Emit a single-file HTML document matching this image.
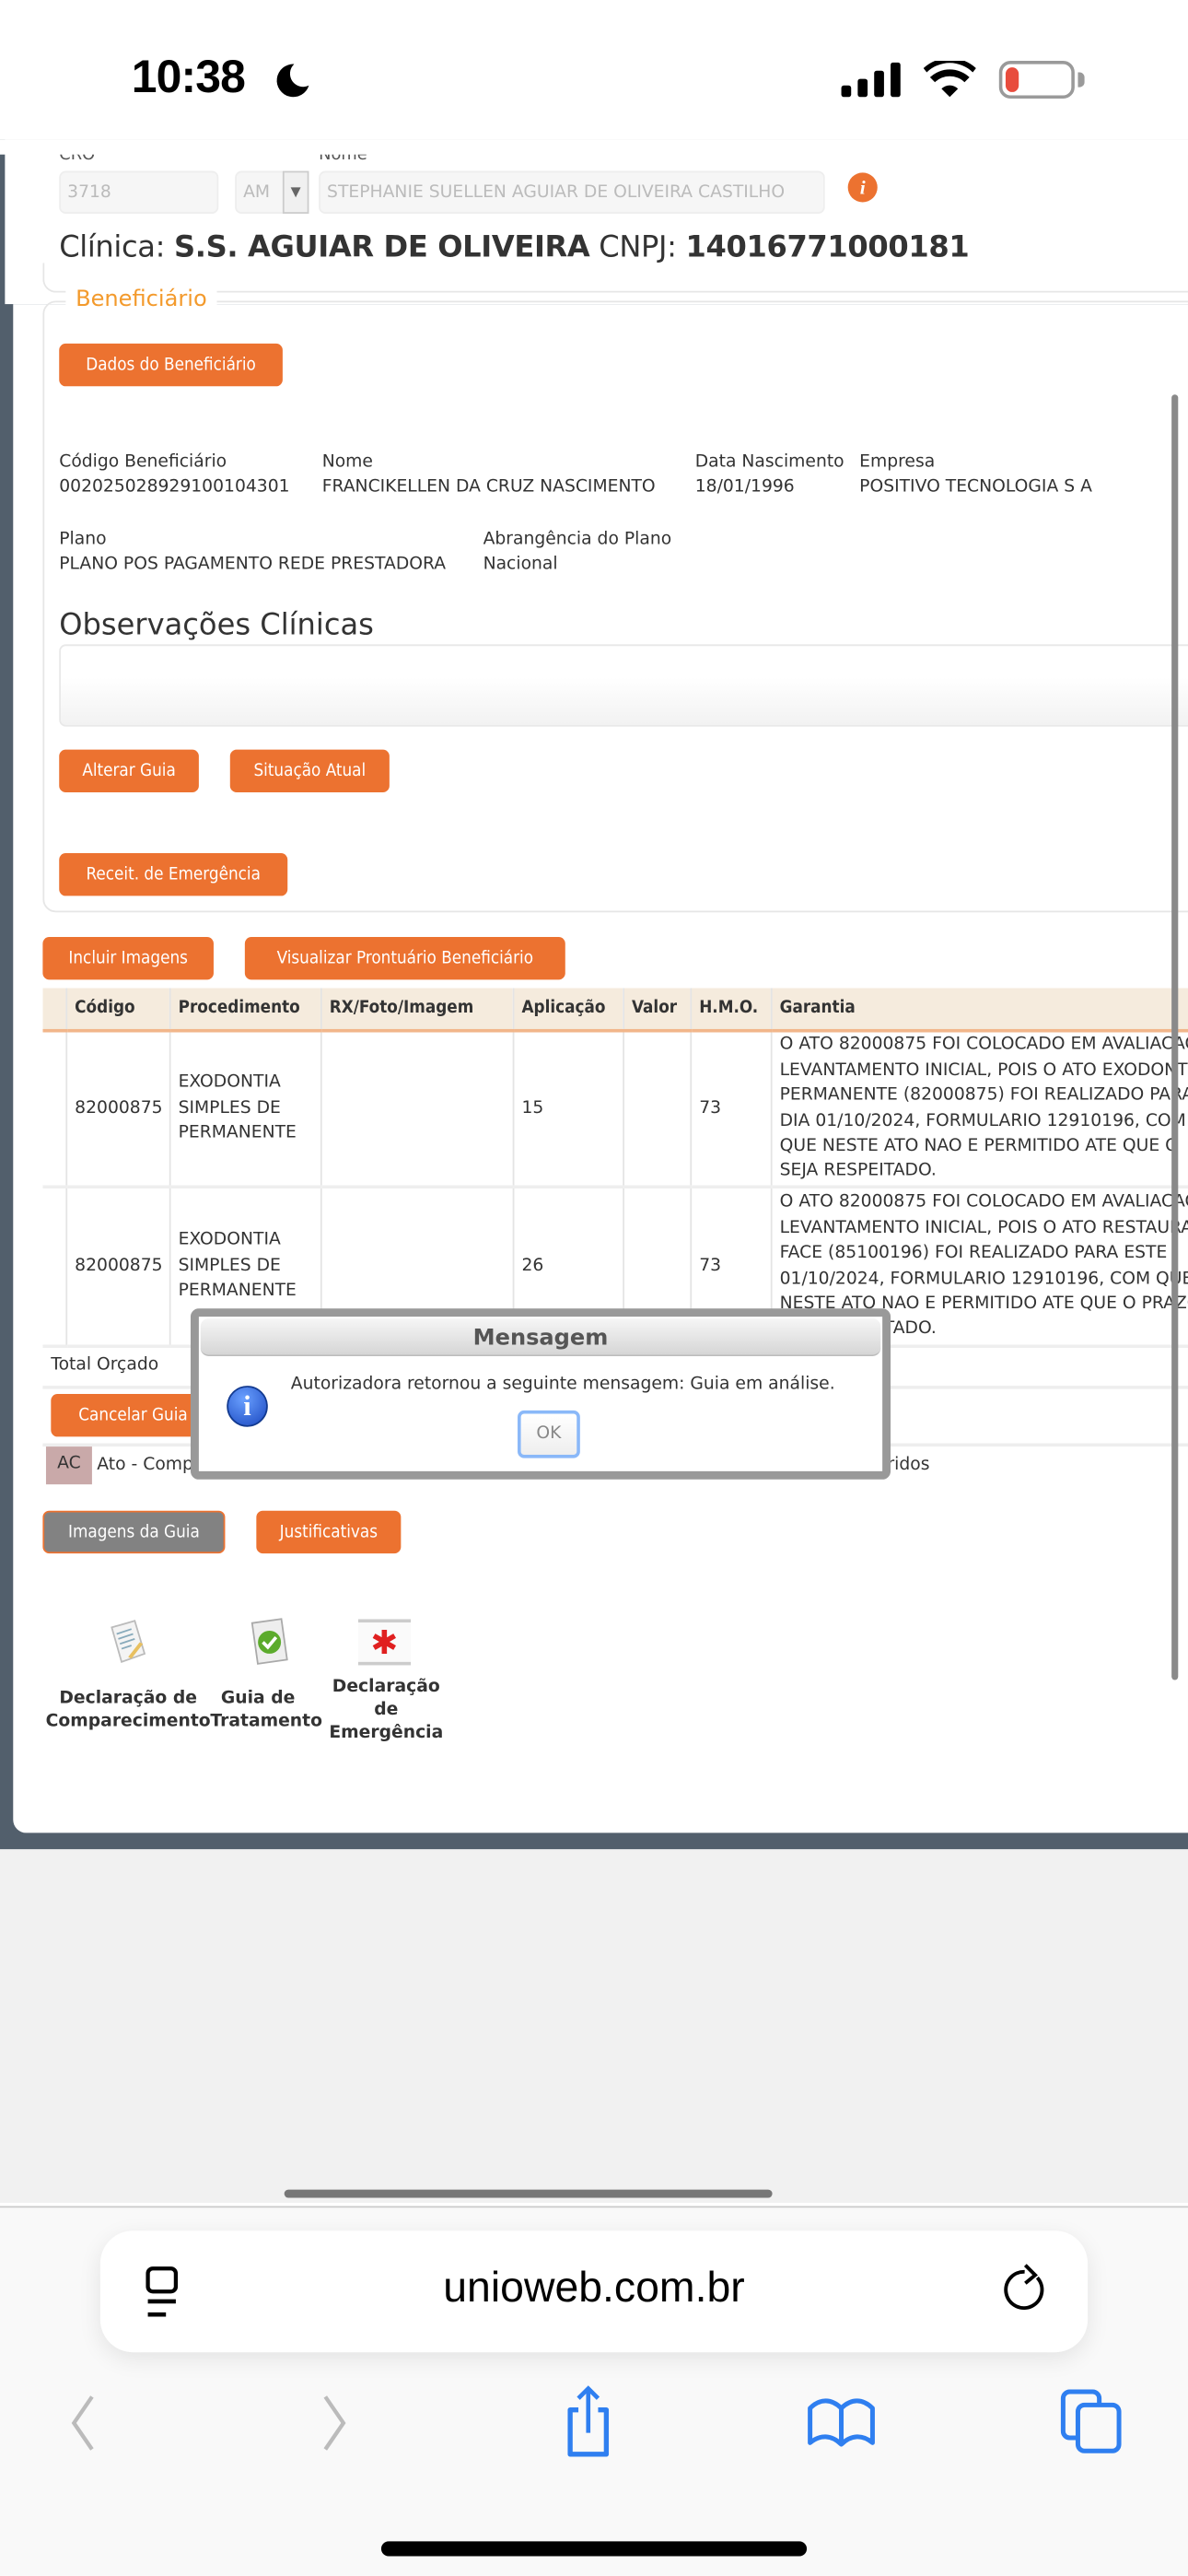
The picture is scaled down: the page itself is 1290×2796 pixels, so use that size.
<!DOCTYPE html>
<html><head><meta charset="utf-8"><style>
*{margin:0;padding:0;box-sizing:border-box}
html,body{width:1290px;height:2796px;overflow:hidden;background:#fff}
#s{position:absolute;left:0;top:0;width:723px;height:1567px;transform:scale(1.78423);transform-origin:0 0;font-family:"DejaVu Sans","Liberation Sans",sans-serif;font-size:10.5px;color:#333;overflow:hidden}
.a{position:absolute;white-space:nowrap}
.btn{position:absolute;background:#ec7230;color:#fff;border-radius:4px;font-size:10.5px;height:26px;line-height:26px;text-align:center;font-family:"DejaVu Sans Condensed","DejaVu Sans",sans-serif}
.inp{position:absolute;background:#f6f6f6;border:1px solid #eee;border-radius:4px;color:#bbb;font-size:10.5px;padding-left:4px;line-height:24px;height:26px}
td,th{border-right:1px solid #e4e4e4;vertical-align:middle;padding:0 5px;font-size:10.5px;line-height:15.4px;text-align:left;overflow:hidden}
th{font-weight:bold;background:#f5ebdd;height:26px;border-bottom:2px solid #f2b68a;font-family:"DejaVu Sans Condensed","DejaVu Sans",sans-serif}
#tw{position:absolute;left:26px;top:601px;width:720px;overflow:hidden}
table{border-collapse:collapse;table-layout:fixed;width:703px}
tr.r td{border-bottom:2px solid #eee}
.lab{position:absolute;font-weight:bold;font-size:10.5px;text-align:center;line-height:14px;color:#333}
</style></head><body><div id="s">
<div class="a" style="left:80px;top:31px;font-family:'Liberation Sans',sans-serif;font-size:28px;font-weight:bold;color:#000;letter-spacing:-0.5px">10:38</div>
<svg class="a" style="left:166px;top:37px" width="24" height="24" viewBox="0 0 24 24"><path d="M13 2a10 10 0 1 0 9 13A8 8 0 0 1 13 2z" fill="#000"/></svg>
<svg class="a" style="left:512px;top:38px" width="40" height="22"><rect x="0" y="14" width="6" height="7" rx="1.5"/><rect x="10" y="10" width="6" height="11" rx="1.5"/><rect x="20" y="5" width="6" height="16" rx="1.5"/><rect x="30" y="0" width="6" height="21" rx="1.5"/></svg>
<svg class="a" style="left:562px;top:37px" width="32" height="23" viewBox="0 0 32 23"><path d="M16 22l-5-5a7 7 0 0 1 10 0z"/><path d="M7 13a13 13 0 0 1 18 0l3-3a17.5 17.5 0 0 0-24 0z"/><path d="M2 8a20 20 0 0 1 28 0l2-2.5a23.5 23.5 0 0 0-32 0z" transform="translate(0,-1)"/></svg>
<div class="a" style="left:608px;top:37px;width:46px;height:23px;border:2.5px solid #9a9a9a;border-radius:7px"></div>
<div class="a" style="left:612px;top:41px;width:8px;height:15px;background:#e84c3d;border-radius:4px"></div>
<div class="a" style="left:656px;top:44px;width:4px;height:9px;background:#9a9a9a;border-radius:0 3px 3px 0"></div>
<div class="a" style="left:0;top:85px;width:723px;height:1040px;background:#525f6c"></div>
<div class="a" style="left:3px;top:85px;width:720px;height:100px;background:#fff"></div>
<div class="a" style="left:8px;top:185px;width:715px;height:930px;background:#fff;border-bottom-left-radius:8px"></div>
<div class="a" style="left:0;top:1125px;width:723px;height:215px;background:#f1f1f1"></div>
<div class="a" style="left:36px;top:89px;font-size:10px;color:#555">CRO</div>
<div class="a" style="left:194px;top:89px;font-size:10px;color:#555">Nome</div>
<div class="a" style="left:0;top:85px;width:723px;height:9px;background:#fff"></div>
<div class="inp" style="left:36px;top:104px;width:97px">3718</div>
<div class="inp" style="left:143px;top:104px;width:45px">AM</div>
<div class="a" style="left:172px;top:104px;width:16px;height:26px;border:1px solid #ccc;background:#f0f0f0;color:#666;font-size:8px;text-align:center;line-height:24px">▼</div>
<div class="inp" style="left:194px;top:104px;width:308px">STEPHANIE SUELLEN AGUIAR DE OLIVEIRA CASTILHO</div>
<div class="a" style="left:516px;top:105px;width:18px;height:18px;border-radius:50%;background:#ec7230;color:#fff;font-weight:bold;font-style:italic;font-size:12px;text-align:center;line-height:18px;font-family:'Liberation Serif',serif">i</div>
<div class="a" style="left:36px;top:140px;font-size:18px;color:#333;letter-spacing:-0.2px">Clínica: <b>S.S. AGUIAR DE OLIVEIRA</b> CNPJ: <b>14016771000181</b></div>
<div class="a" style="left:26px;top:160px;width:710px;height:18px;border:1px solid #e6e6e6;border-top:none;border-radius:0 0 0 8px"></div>
<div class="a" style="left:26px;top:183px;width:710px;height:372px;border:1px solid #e6e6e6;border-radius:8px"></div>
<div class="a" style="left:40px;top:174px;padding:0 6px;background:#fff;color:#f39a2c;font-size:13.5px">Beneficiário</div>
<div class="btn" style="left:36px;top:209px;width:136px">Dados do Beneficiário</div>
<div class="a" style="left:36px;top:275px">Código Beneficiário</div>
<div class="a" style="left:36px;top:290px">002025028929100104301</div>
<div class="a" style="left:196px;top:275px">Nome</div>
<div class="a" style="left:196px;top:290px">FRANCIKELLEN DA CRUZ NASCIMENTO</div>
<div class="a" style="left:423px;top:275px">Data Nascimento</div>
<div class="a" style="left:423px;top:290px">18/01/1996</div>
<div class="a" style="left:523px;top:275px">Empresa</div>
<div class="a" style="left:523px;top:290px">POSITIVO TECNOLOGIA S A</div>
<div class="a" style="left:36px;top:322px">Plano</div>
<div class="a" style="left:36px;top:337px">PLANO POS PAGAMENTO REDE PRESTADORA</div>
<div class="a" style="left:294px;top:322px">Abrangência do Plano</div>
<div class="a" style="left:294px;top:337px">Nacional</div>
<div class="a" style="left:36px;top:370px;font-size:18px">Observações Clínicas</div>
<div class="a" style="left:36px;top:392px;width:700px;height:50px;border:1px solid #e8e8e8;border-radius:4px;background:linear-gradient(#fff 40%,#f2f2f2)"></div>
<div class="btn" style="left:36px;top:456px;width:85px">Alterar Guia</div>
<div class="btn" style="left:140px;top:456px;width:97px">Situação Atual</div>
<div class="btn" style="left:36px;top:519px;width:139px">Receit. de Emergência</div>
<div class="btn" style="left:26px;top:570px;width:104px">Incluir Imagens</div>
<div class="btn" style="left:149px;top:570px;width:195px">Visualizar Prontuário Beneficiário</div>
<div id="tw"><table>
<colgroup><col style="width:14px"><col style="width:63px"><col style="width:92px"><col style="width:117px"><col style="width:67px"><col style="width:41px"><col style="width:49px"><col style="width:260px"></colgroup>
<tr><th></th><th>Código</th><th>Procedimento</th><th>RX/Foto/Imagem</th><th>Aplicação</th><th>Valor</th><th>H.M.O.</th><th>Garantia</th></tr>
<tr class="r" style="height:95px"><td></td><td>82000875</td><td>EXODONTIA SIMPLES DE PERMANENTE</td><td></td><td>15</td><td></td><td>73</td><td style="white-space:nowrap">O ATO 82000875 FOI COLOCADO EM AVALIACAO<br>LEVANTAMENTO INICIAL, POIS O ATO EXODONTIA<br>PERMANENTE (82000875) FOI REALIZADO PARA<br>DIA 01/10/2024, FORMULARIO 12910196, COM<br>QUE NESTE ATO NAO E PERMITIDO ATE QUE O<br>SEJA RESPEITADO.</td></tr>
<tr class="r" style="height:97px"><td></td><td>82000875</td><td>EXODONTIA SIMPLES DE PERMANENTE</td><td></td><td>26</td><td></td><td>73</td><td style="white-space:nowrap">O ATO 82000875 FOI COLOCADO EM AVALIACAO<br>LEVANTAMENTO INICIAL, POIS O ATO RESTAURA<br>FACE (85100196) FOI REALIZADO PARA ESTE<br>01/10/2024, FORMULARIO 12910196, COM QUE<br>NESTE ATO NAO E PERMITIDO ATE QUE O PRAZO<br>SEJA RESPEITADO.</td></tr>
</table></div>
<div class="a" style="left:31px;top:824px">Total Orçado</div>
<div class="a" style="left:26px;top:843px;width:700px;height:2px;background:#eee"></div>
<div class="btn" style="left:31px;top:848px;width:100px">Cancelar Guia</div>
<div class="a" style="left:26px;top:878px;width:700px;height:2px;background:#eee"></div>
<div class="a" style="left:28px;top:880px;width:28px;height:23px;background:#c9a9a9;text-align:center;line-height:20px">AC</div>
<div class="a" style="left:59px;top:885px">Ato - Comp</div>
<div class="a" style="left:540px;top:885px">ridos</div>
<div class="btn" style="left:26px;top:919px;width:111px;background:#828282;border:1px solid #ec7230;line-height:24px">Imagens da Guia</div>
<div class="btn" style="left:156px;top:919px;width:88px">Justificativas</div>
<svg class="a" style="left:64px;top:984px" width="28" height="30"><path d="M4 6l14-4 6 20-14 5z" fill="#f4f4f4" stroke="#bbb"/><path d="M7 10l9-3M8 13l9-3M9 16l9-3M10 19l6-2" stroke="#8ab" stroke-width="1"/><path d="M14 24l7-9 2 1-7 9z" fill="#e8c060"/></svg>
<svg class="a" style="left:151px;top:984px" width="26" height="30"><rect x="4" y="2" width="18" height="25" fill="#eee" stroke="#aaa" transform="rotate(-8 13 14)"/><circle cx="13" cy="15" r="7" fill="#5cab2c"/><path d="M9 15l3 3 5-6" stroke="#fff" stroke-width="2" fill="none"/></svg>
<div class="a" style="left:218px;top:985px;width:32px;height:28px;background:#fafafa;border-top:2px solid #ccc;border-bottom:2px solid #ccc;color:#e02020;font-size:20px;text-align:center;line-height:24px;font-weight:bold">✱</div>
<div class="lab" style="left:26px;top:1026px;width:104px">Declaração de<br>Comparecimento</div>
<div class="lab" style="left:128px;top:1026px;width:58px">Guia de<br>Tratamento</div>
<div class="lab" style="left:196px;top:1019px;width:78px">Declaração<br>de<br>Emergência</div>
<div class="a" style="left:713px;top:240px;width:4px;height:782px;background:#8a8a8a;border-radius:2px"></div>
<div class="a" style="left:116px;top:796px;width:426px;height:104px;background:#fff;border:5px solid #999;border-radius:5px"></div>
<div class="a" style="left:122px;top:802px;width:414px;height:23px;border-radius:5px;background:linear-gradient(#f6f6f6,#d6d6d6);border-bottom:1px solid #bbb;text-align:center;font-weight:bold;font-size:13.5px;color:#555;line-height:24px">Mensagem</div>
<div class="a" style="left:138px;top:843px;width:25px;height:25px;border-radius:50%;background:radial-gradient(circle at 40% 30%,#6aa0ff,#1a48c0);border:1px solid #123a90;color:#fff;font-weight:bold;font-size:17px;text-align:center;line-height:24px;font-family:'Liberation Serif',serif">i</div>
<div class="a" style="left:177px;top:836px">Autorizadora retornou a seguinte mensagem: Guia em análise.</div>
<div class="a" style="left:315px;top:858px;width:38px;height:29px;border:2px solid #8ab8f8;border-radius:4px;background:linear-gradient(#fff,#eee);color:#888;text-align:center;line-height:25px">OK</div>
<div class="a" style="left:0;top:1342px;width:723px;height:225px;background:#f9f9f9;border-top:1px solid #ccc"></div>
<div class="a" style="left:173px;top:1332px;width:297px;height:5px;background:#777;border-radius:3px"></div>
<div class="a" style="left:61px;top:1357px;width:601px;height:74px;background:#fff;border-radius:20px;box-shadow:0 4px 14px rgba(0,0,0,0.09)"></div>
<div class="a" style="left:0;top:1376px;width:723px;text-align:center;font-family:'Liberation Sans',sans-serif;font-size:26px;color:#000">unioweb.com.br</div>
<svg class="a" style="left:88px;top:1378px" width="24" height="36"><rect x="2" y="2" width="17" height="14" rx="3" fill="none" stroke="#000" stroke-width="2.4"/><path d="M2 22h17M2 30h11" stroke="#000" stroke-width="2.6"/></svg>
<svg class="a" style="left:610px;top:1375px" width="30" height="36"><path d="M18 8A11 11 0 1 0 24 14" fill="none" stroke="#000" stroke-width="2.2" transform="rotate(-20 13 20)"/><path d="M14 3l6 6-6 5" fill="none" stroke="#000" stroke-width="2.2"/></svg>
<svg class="a" style="left:36px;top:1455px" width="24" height="38"><path d="M20 3L9 19l11 16" fill="none" stroke="#bbb" stroke-width="2.4"/></svg>
<svg class="a" style="left:194px;top:1455px" width="24" height="38"><path d="M4 3l11 16L4 35" fill="none" stroke="#bbb" stroke-width="2.4"/></svg>
<svg class="a" style="left:340px;top:1450px" width="36" height="46" viewBox="0 0 36 46"><path d="M12 16H7v27h22V16h-5" fill="none" stroke="#2f7ff0" stroke-width="3" stroke-linejoin="round"/><path d="M18 3v27M12 9l6-6 6 6" fill="none" stroke="#2f7ff0" stroke-width="2.6"/></svg>
<svg class="a" style="left:490px;top:1455px" width="44" height="36"><path d="M3 31V10c6-6 13-6 19 0 6-6 13-6 19 0v21c-6-5-13-5-19 1-6-6-13-6-19-1zM22 10v22" fill="none" stroke="#2f7ff0" stroke-width="2.8" stroke-linejoin="round"/></svg>
<svg class="a" style="left:644px;top:1452px" width="42" height="42"><rect x="3" y="3" width="22" height="28" rx="4" fill="none" stroke="#2f7ff0" stroke-width="2.8"/><rect x="12" y="11" width="25" height="28" rx="4" fill="#f9f9f9" stroke="#2f7ff0" stroke-width="2.8"/></svg>
<div class="a" style="left:232px;top:1546px;width:259px;height:9px;background:#000;border-radius:5px"></div>
</div></body></html>
